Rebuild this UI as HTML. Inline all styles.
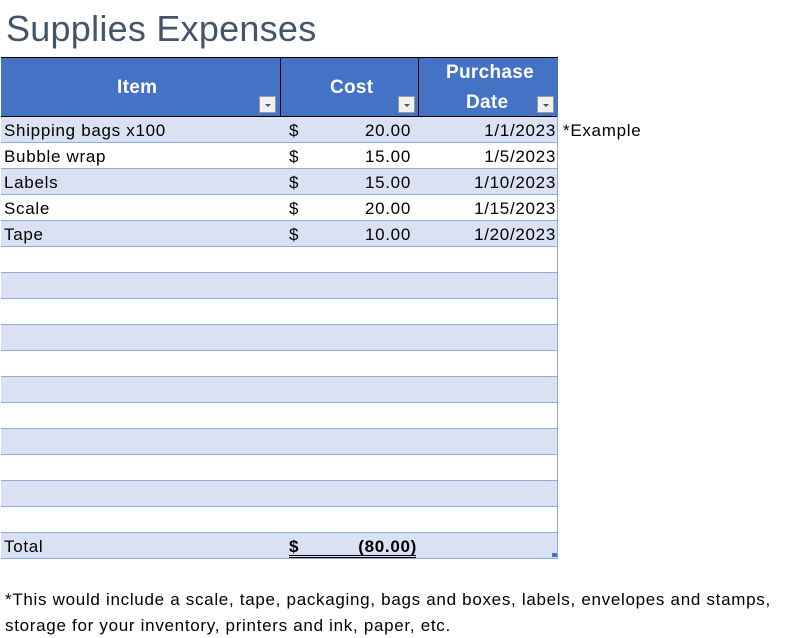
<!DOCTYPE html>
<html><head><style>
body{margin:0;width:799px;height:638px;background:#fff;font-family:"Liberation Sans",sans-serif;position:relative;overflow:hidden;color:#000}
.a{position:absolute;white-space:nowrap}
.r{position:absolute;left:1px;width:557px;height:25px;border-bottom:1px solid #8EA9DB}
.t{font-size:17px;letter-spacing:0.7px}
.h{color:#fff;font-weight:bold;font-size:19px;letter-spacing:0.3px}
.dd{position:absolute;width:17px;height:17px;background:#f0f0f0;border:1px solid #9a9a9a;box-sizing:border-box}
.dd:after{content:"";position:absolute;left:5px;top:7px;border-left:3px solid transparent;border-right:3px solid transparent;border-top:3px solid #555}
</style></head><body>
<div class="a" style="left:6px;top:8px;font-size:36px;color:#44546A;letter-spacing:0.25px">Supplies Expenses</div>
<div class="r" style="top:117px;background:#D9E1F2"></div>
<div class="r" style="top:143px"></div>
<div class="r" style="top:169px;background:#D9E1F2"></div>
<div class="r" style="top:195px"></div>
<div class="r" style="top:221px;background:#D9E1F2"></div>
<div class="r" style="top:247px"></div>
<div class="r" style="top:273px;background:#D9E1F2"></div>
<div class="r" style="top:299px"></div>
<div class="r" style="top:325px;background:#D9E1F2"></div>
<div class="r" style="top:351px"></div>
<div class="r" style="top:377px;background:#D9E1F2"></div>
<div class="r" style="top:403px"></div>
<div class="r" style="top:429px;background:#D9E1F2"></div>
<div class="r" style="top:455px"></div>
<div class="r" style="top:481px;background:#D9E1F2"></div>
<div class="r" style="top:507px"></div>
<div class="r" style="top:533px;background:#D9E1F2"></div>
<div class="a" style="left:1px;top:57px;width:557px;height:60px;background:#4472C4;border-top:1px solid #000;border-bottom:1px solid #000;box-sizing:border-box"></div>
<div class="a" style="left:280px;top:57px;width:1px;height:60px;background:#000"></div>
<div class="a" style="left:418px;top:57px;width:1px;height:60px;background:#000"></div>
<div class="a h" style="left:117px;top:77px">Item</div>
<div class="a h" style="left:330px;top:77px">Cost</div>
<div class="a h" style="left:446px;top:62px">Purchase</div>
<div class="a h" style="left:466px;top:92px">Date</div>
<div class="dd" style="left:259px;top:96px"></div>
<div class="dd" style="left:398px;top:96px"></div>
<div class="dd" style="left:537px;top:96px"></div>
<div class="a" style="left:557px;top:116px;width:1px;height:442px;background:#8EA9DB"></div>
<div class="a" style="left:552px;top:553px;width:5px;height:4px;background:#4472C4"></div>

<div class="a t" style="left:4px;top:121px">Shipping bags x100</div>
<div class="a t" style="left:4px;top:147px">Bubble wrap</div>
<div class="a t" style="left:4px;top:173px">Labels</div>
<div class="a t" style="left:4px;top:199px">Scale</div>
<div class="a t" style="left:4px;top:225px">Tape</div>
<div class="a t" style="left:289px;top:121px">$</div>
<div class="a t" style="left:289px;top:147px">$</div>
<div class="a t" style="left:289px;top:173px">$</div>
<div class="a t" style="left:289px;top:199px">$</div>
<div class="a t" style="left:289px;top:225px">$</div>
<div class="a t" style="right:388px;top:121px">20.00</div>
<div class="a t" style="right:388px;top:147px">15.00</div>
<div class="a t" style="right:388px;top:173px">15.00</div>
<div class="a t" style="right:388px;top:199px">20.00</div>
<div class="a t" style="right:388px;top:225px">10.00</div>
<div class="a t" style="right:243px;top:121px">1/1/2023</div>
<div class="a t" style="right:243px;top:147px">1/5/2023</div>
<div class="a t" style="right:243px;top:173px">1/10/2023</div>
<div class="a t" style="right:243px;top:199px">1/15/2023</div>
<div class="a t" style="right:243px;top:225px">1/20/2023</div>
<div class="a t" style="left:563px;top:121px">*Example</div>
<div class="a t" style="left:4px;top:537px">Total</div>
<div class="a t" style="left:289px;top:537px;font-weight:bold">$</div>
<div class="a t" style="right:382px;top:537px;font-weight:bold">(80.00)</div>
<div class="a" style="left:289px;top:555px;width:127px;height:1px;background:#000"></div>
<div class="a" style="left:289px;top:557px;width:127px;height:1px;background:#000"></div>
<div class="a t" style="left:5px;top:590px">*This would include a scale, tape, packaging, bags and boxes, labels, envelopes and stamps,</div>
<div class="a t" style="left:5px;top:616px">storage for your inventory, printers and ink, paper, etc.</div>
</body></html>
